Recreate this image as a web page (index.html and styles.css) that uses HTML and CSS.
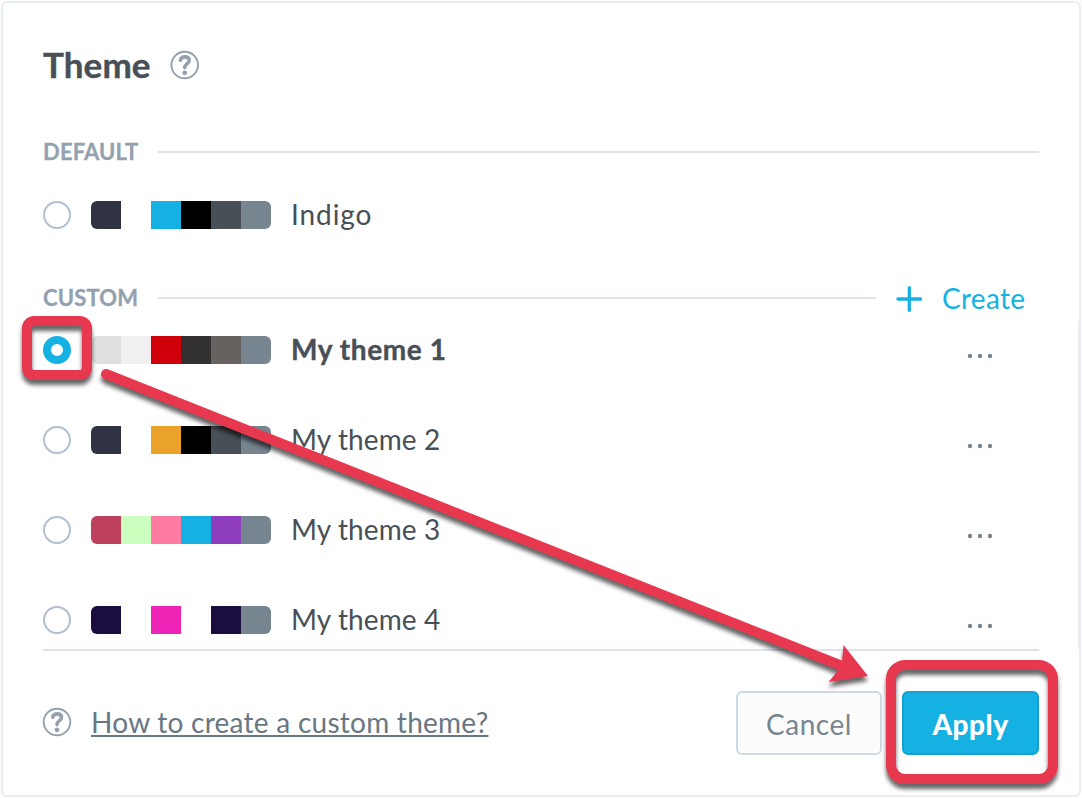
FILE: index.html
```
<!DOCTYPE html>
<html lang="en">
<head>
<meta charset="utf-8">
<title>Theme</title>
<link rel="stylesheet" href="styles.css">
</head>
<body>
<main class="card">
  <header class="header">
    <h1 class="title">Theme</h1>
    <svg class="help" viewBox="0 0 30 30"><circle cx="14.7" cy="15" r="13.3"/><path class="mark" d="M10.4 10.2C11 8 12.7 6.9 14.8 6.9C17.5 6.9 19.2 8.3 19.2 10.6C19.2 13.7 14.7 13.6 14.7 17.6"/><circle class="dot" cx="14.7" cy="22.8" r="2.4"/></svg>
  </header>

  <div class="section"><h2 class="section-name default">DEFAULT</h2><span class="rule"></span></div>
  <div class="row first"><span class="radio"></span><span class="swatches"><i class="navy"></i><i></i><i class="blue"></i><i class="black"></i><i class="slate"></i><i class="gray"></i></span><span class="name indigo">Indigo</span></div>

  <div class="section custom-head"><h2 class="section-name custom">CUSTOM</h2><span class="rule"></span>
    <a class="create"><svg class="plus" viewBox="0 0 26 26"><path d="M13.3 1.7V24.3M2 13H24.6"/></svg><span class="create-text">Create</span></a>
  </div>
  <div class="list">
    <div class="row"><span class="radio checked"></span><span class="swatches"><i class="light"></i><i class="pale"></i><i class="red"></i><i class="coal"></i><i class="taupe"></i><i class="gray"></i></span><span class="name selected">My theme 1</span><svg class="more" viewBox="0 0 26 6"><circle cx="3" cy="3" r="2.2"/><circle cx="13" cy="3" r="2.2"/><circle cx="23" cy="3" r="2.2"/></svg></div>
    <div class="row"><span class="radio"></span><span class="swatches"><i class="navy"></i><i></i><i class="orange"></i><i class="black"></i><i class="slate"></i><i class="gray"></i></span><span class="name">My theme 2</span><svg class="more" viewBox="0 0 26 6"><circle cx="3" cy="3" r="2.2"/><circle cx="13" cy="3" r="2.2"/><circle cx="23" cy="3" r="2.2"/></svg></div>
    <div class="row"><span class="radio"></span><span class="swatches"><i class="crimson"></i><i class="mint"></i><i class="pink"></i><i class="blue"></i><i class="purple"></i><i class="gray"></i></span><span class="name">My theme 3</span><svg class="more" viewBox="0 0 26 6"><circle cx="3" cy="3" r="2.2"/><circle cx="13" cy="3" r="2.2"/><circle cx="23" cy="3" r="2.2"/></svg></div>
    <div class="row"><span class="radio"></span><span class="swatches"><i class="ink"></i><i></i><i class="magenta"></i><i></i><i class="ink"></i><i class="gray"></i></span><span class="name">My theme 4</span><svg class="more" viewBox="0 0 26 6"><circle cx="3" cy="3" r="2.2"/><circle cx="13" cy="3" r="2.2"/><circle cx="23" cy="3" r="2.2"/></svg></div>
  </div>

  <footer class="footer">
    <svg class="help" viewBox="0 0 30 30"><circle cx="15" cy="15" r="13.3"/><path class="mark" d="M10.7 10.2C11.3 8 13 6.9 15.1 6.9C17.8 6.9 19.5 8.3 19.5 10.6C19.5 13.7 15 13.6 15 17.6"/><circle class="dot" cx="15" cy="22.8" r="2.4"/></svg>
    <a class="link">How to create a custom theme?</a>
    <button class="button cancel"><span>Cancel</span></button>
    <button class="button apply"><span>Apply</span></button>
  </footer>
</main>
<span class="lane"></span>
<svg class="annotations" viewBox="0 0 1082 798">
  <g class="callout"><rect x="27" y="321" width="60" height="54" rx="7"/></g>
  <g class="callout"><path d="M106 374L842 666"/><path class="head" d="M843.5 645L868 676L828.5 682L838.5 670L842 661Z"/></g>
  <g class="callout"><rect x="891" y="665" width="162" height="114" rx="14"/></g>
</svg>
</body>
</html>
```

FILE: styles.css
```
* { box-sizing: border-box; }
body { margin: 0; width: 1082px; height: 798px; padding: 1px; overflow: hidden; background: #fdfdfd; font-family: Lato, "Open Sans", sans-serif; color: #484f56; }
.card { display: flex; flex-direction: column; width: 1080px; height: 796px; padding: 30px 40px 0; border: 2px solid #e9eef3; border-radius: 6px; background: #fff; }
.header { display: flex; align-items: center; height: 64px; gap: 20px; }
.title { margin: 0; width: 107px; font-size: 35px; line-height: 40px; font-weight: 700; letter-spacing: 0.1px; padding-bottom: 2px; white-space: nowrap; -webkit-text-stroke: 0.4px currentColor; }
.help { flex: none; width: 30px; height: 30px; fill: none; stroke: #93a1af; stroke-width: 1.9; }
.help .mark { stroke-width: 3.6; stroke-linecap: round; }
.help .dot { fill: #93a1af; stroke: none; }

.section { display: flex; align-items: center; height: 40px; margin-top: 35px; }
.section-name { flex: none; margin: 0; width: 115px; font-size: 22px; line-height: 28px; font-weight: 700; color: #93a1af; letter-spacing: 0.15px; -webkit-text-stroke: 0.3px currentColor; }
.rule { flex: 1; height: 2px; background: #dde3ec; }
.row { display: flex; align-items: center; flex: none; height: 90px; }
.first { height: 86px; }
.radio { flex: none; width: 28px; height: 28px; border: 2px solid #b1c0d1; border-radius: 50%; }
.checked { border: 8px solid #15b1e2; }
.swatches { display: flex; flex: none; width: 180px; height: 28px; margin: 0 20px; border-radius: 6px; overflow: hidden; }
.swatches i { width: 30px; height: 28px; }
.navy { background: #303442; } .blue { background: #15b1e2; } .black { background: #000; }
.slate { background: #484f56; } .gray { background: #778591; } .light { background: #e1dfe0; }
.pale { background: #f1eff0; } .red { background: #d0000a; } .coal { background: #333132; }
.taupe { background: #676160; } .orange { background: #eba22b; } .crimson { background: #bd415c; }
.mint { background: #caffbd; } .pink { background: #ff7ba1; } .purple { background: #8f3fbe; }
.ink { background: #1b0e3e; } .magenta { background: #ee24b7; }
.name { flex: 1; padding-bottom: 2px; font-size: 28px; line-height: 34px; letter-spacing: 0.1px; white-space: nowrap; }
.indigo { letter-spacing: 0.9px; }
.selected { font-weight: 700; letter-spacing: 0.6px; -webkit-text-stroke: 0.4px currentColor; }
.more { flex: none; width: 26px; height: 6px; margin: 12px 46px 0 0; fill: #778591; }

.custom-head { margin-top: 20px; }
.create { display: flex; align-items: center; width: 163px; padding-left: 20px; color: #15b1e2; font-size: 28px; line-height: 34px; letter-spacing: 0.3px; }
.plus { flex: none; width: 26px; height: 26px; margin: 2px 20px 0 0; fill: none; stroke: #15b1e2; stroke-width: 3.3; stroke-linecap: round; }
.create-text { padding-bottom: 1px; }
.list { display: flex; flex-direction: column; height: 344px; margin-top: -13px; overflow: hidden; }

.footer { display: flex; flex: none; align-items: center; height: 146px; border-top: 2px solid #dde3ec; }
.footer .help { margin: 0 0 2px -1px; }
.link { flex: 1; margin-left: 19px; padding-bottom: 3px; font-size: 28px; line-height: 34px; letter-spacing: 0.26px; color: #687783; white-space: nowrap; text-decoration: underline; text-decoration-thickness: 2px; text-underline-offset: 2px; text-decoration-skip-ink: none; }
.button { flex: none; height: 64px; padding: 1px 0 0; border: 2px solid #cddae5; border-radius: 6px; font-family: inherit; font-size: 28px; line-height: 34px; letter-spacing: 0.5px; color: #778591; background: #fcfcfc; }
.cancel { width: 146px; margin-right: 20px; }
.apply { width: 137px; border-color: #16a2d0; background: #15b1e2; color: #fff; font-weight: 900; }

.lane { position: absolute; top: 321px; left: 1078px; width: 3px; height: 328px; background: #e9ecf1; }
.annotations { position: absolute; top: 0; left: 0; width: 1082px; height: 798px; }
.callout { fill: none; stroke: #e8384f; stroke-width: 10; stroke-linecap: round; filter: drop-shadow(0 5px 2px rgba(0, 0, 0, 0.6)); }
.callout .head { fill: #e8384f; stroke: none; }
```
